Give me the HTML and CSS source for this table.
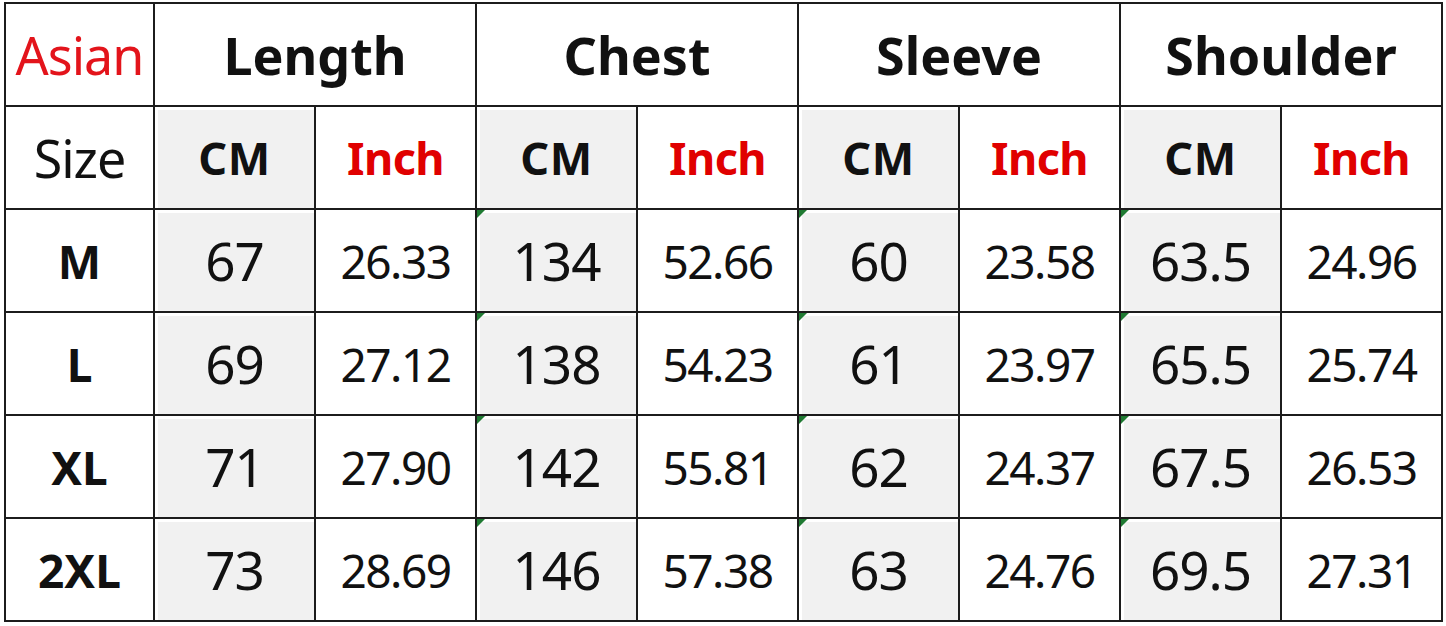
FILE: index.html
```html
<!DOCTYPE html>
<html lang="en">
<head>
<meta charset="utf-8">
<title>Size Chart</title>
<link rel="stylesheet" href="styles.css">
</head>
<body>
<div class="chart">
  <div class="cell label red">Asian</div>
  <div class="cell head span2">Length</div>
  <div class="cell head span2">Chest</div>
  <div class="cell head span2">Sleeve</div>
  <div class="cell head span2">Shoulder</div>

  <div class="cell label">Size</div>
  <div class="cell unit grey">CM</div><div class="cell unit red">Inch</div>
  <div class="cell unit grey">CM</div><div class="cell unit red">Inch</div>
  <div class="cell unit grey">CM</div><div class="cell unit red">Inch</div>
  <div class="cell unit grey">CM</div><div class="cell unit red">Inch</div>

  <div class="cell size">M</div>
  <div class="cell cm grey">67</div><div class="cell in">26.33</div>
  <div class="cell cm grey mark">134</div><div class="cell in">52.66</div>
  <div class="cell cm grey mark">60</div><div class="cell in">23.58</div>
  <div class="cell cm grey mark">63.5</div><div class="cell in">24.96</div>

  <div class="cell size">L</div>
  <div class="cell cm grey">69</div><div class="cell in">27.12</div>
  <div class="cell cm grey mark">138</div><div class="cell in">54.23</div>
  <div class="cell cm grey mark">61</div><div class="cell in">23.97</div>
  <div class="cell cm grey mark">65.5</div><div class="cell in">25.74</div>

  <div class="cell size">XL</div>
  <div class="cell cm grey">71</div><div class="cell in">27.90</div>
  <div class="cell cm grey mark">142</div><div class="cell in">55.81</div>
  <div class="cell cm grey mark">62</div><div class="cell in">24.37</div>
  <div class="cell cm grey mark">67.5</div><div class="cell in">26.53</div>

  <div class="cell size">2XL</div>
  <div class="cell cm grey">73</div><div class="cell in">28.69</div>
  <div class="cell cm grey mark">146</div><div class="cell in">57.38</div>
  <div class="cell cm grey mark">63</div><div class="cell in">24.76</div>
  <div class="cell cm grey mark">69.5</div><div class="cell in">27.31</div>
</div>
</body>
</html>
```

FILE: styles.css
```css
html, body {
  margin: 0;
  padding: 0;
  background: #ffffff;
}

body {
  font-family: "Noto Sans", "Open Sans", sans-serif;
  color: #111111;
}

.chart {
  display: grid;
  grid-template-columns: 147px repeat(8, 159px);
  grid-template-rows: repeat(6, 101px);
  gap: 2px;
  padding: 2px;
  background: #1c1c1c;
  width: max-content;
  margin: 2px 0 0 4px;
}

.cell {
  position: relative;
  background: #ffffff;
  display: flex;
  align-items: center;
  justify-content: center;
  line-height: 1;
  white-space: nowrap;
}

.span2 {
  grid-column: span 2;
}

.grey {
  background: #f1f1f1;
  box-shadow: inset 3px 3px 0 #ffffff;
}

.red {
  color: #e3141b;
}

.label {
  font-size: 52px;
  font-weight: 400;
  letter-spacing: -1px;
}

.head {
  font-size: 52px;
  font-weight: 700;
  letter-spacing: 0;
}

.unit {
  font-size: 45px;
  font-weight: 700;
  letter-spacing: -0.5px;
}

.unit.grey {
  letter-spacing: 0.5px;
}

.unit.red {
  color: #e00000;
}

.size {
  font-size: 46px;
  font-weight: 700;
}

.cm {
  font-size: 53px;
  letter-spacing: -1px;
}

.in {
  font-size: 46px;
  letter-spacing: -1.5px;
}

.mark::before {
  content: "";
  position: absolute;
  top: 0;
  left: 0;
  width: 0;
  height: 0;
  border-top: 8px solid #1f7a32;
  border-right: 8px solid transparent;
}
```
